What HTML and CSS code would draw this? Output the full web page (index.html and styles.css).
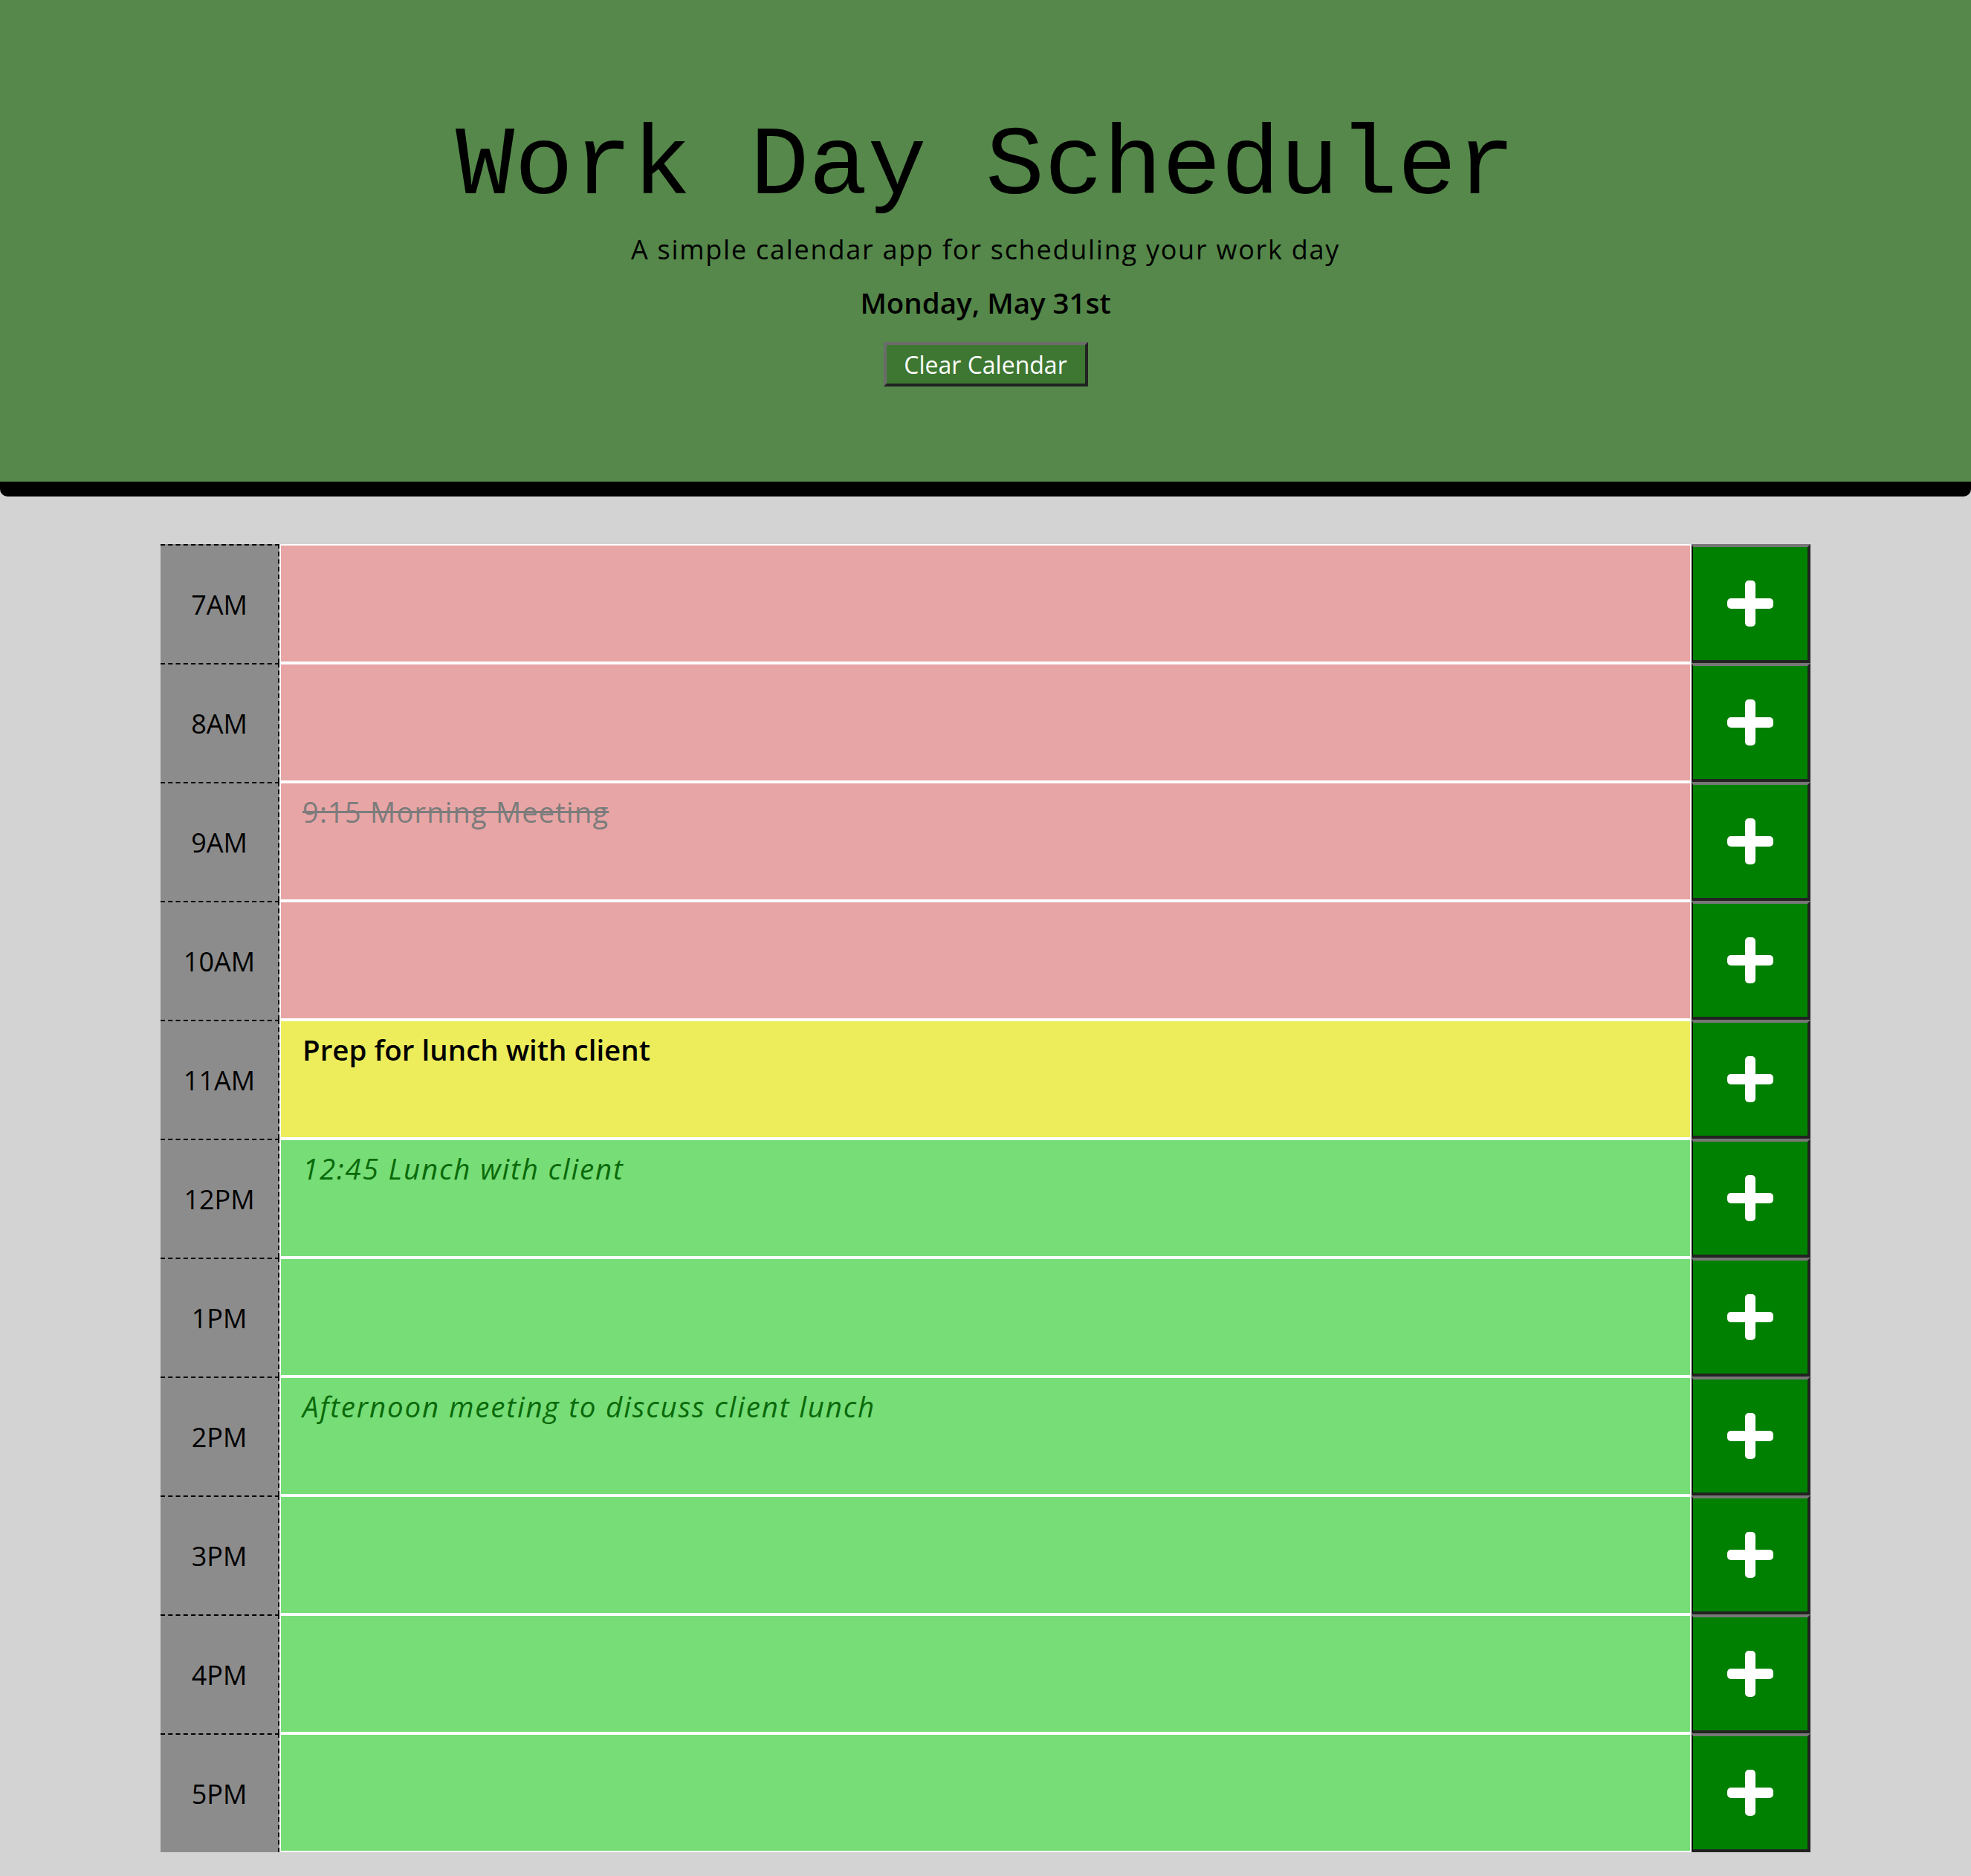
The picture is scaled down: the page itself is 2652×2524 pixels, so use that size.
FILE: index.html
```html
<!DOCTYPE html>
<html lang="en">
<head>
<meta charset="utf-8">
<title>Work Day Scheduler</title>
<link rel="stylesheet" href="styles.css">
</head>
<body>
<header class="jumbotron">
  <h1 class="title">Work Day Scheduler</h1>
  <p class="lead">A simple calendar app for scheduling your work day</p>
  <p class="current-day">Monday, May 31st</p>
  <button class="clear-btn" type="button">Clear Calendar</button>
</header>
<main class="container">
  <div class="row">
    <div class="hour">7AM</div>
    <textarea class="description past"></textarea>
    <button class="save-btn" type="button"><svg viewBox="0 0 62 62" width="62" height="62"><rect x="24" y="0" width="14" height="62" rx="5"/><rect x="0" y="24" width="62" height="14" rx="5"/></svg></button>
  </div>
  <div class="row">
    <div class="hour">8AM</div>
    <textarea class="description past"></textarea>
    <button class="save-btn" type="button"><svg viewBox="0 0 62 62" width="62" height="62"><rect x="24" y="0" width="14" height="62" rx="5"/><rect x="0" y="24" width="62" height="14" rx="5"/></svg></button>
  </div>
  <div class="row">
    <div class="hour">9AM</div>
    <textarea class="description past">9:15 Morning Meeting</textarea>
    <button class="save-btn" type="button"><svg viewBox="0 0 62 62" width="62" height="62"><rect x="24" y="0" width="14" height="62" rx="5"/><rect x="0" y="24" width="62" height="14" rx="5"/></svg></button>
  </div>
  <div class="row">
    <div class="hour">10AM</div>
    <textarea class="description past"></textarea>
    <button class="save-btn" type="button"><svg viewBox="0 0 62 62" width="62" height="62"><rect x="24" y="0" width="14" height="62" rx="5"/><rect x="0" y="24" width="62" height="14" rx="5"/></svg></button>
  </div>
  <div class="row">
    <div class="hour">11AM</div>
    <textarea class="description present">Prep for lunch with client</textarea>
    <button class="save-btn" type="button"><svg viewBox="0 0 62 62" width="62" height="62"><rect x="24" y="0" width="14" height="62" rx="5"/><rect x="0" y="24" width="62" height="14" rx="5"/></svg></button>
  </div>
  <div class="row">
    <div class="hour">12PM</div>
    <textarea class="description future">12:45 Lunch with client</textarea>
    <button class="save-btn" type="button"><svg viewBox="0 0 62 62" width="62" height="62"><rect x="24" y="0" width="14" height="62" rx="5"/><rect x="0" y="24" width="62" height="14" rx="5"/></svg></button>
  </div>
  <div class="row">
    <div class="hour">1PM</div>
    <textarea class="description future"></textarea>
    <button class="save-btn" type="button"><svg viewBox="0 0 62 62" width="62" height="62"><rect x="24" y="0" width="14" height="62" rx="5"/><rect x="0" y="24" width="62" height="14" rx="5"/></svg></button>
  </div>
  <div class="row">
    <div class="hour">2PM</div>
    <textarea class="description future">Afternoon meeting to discuss client lunch</textarea>
    <button class="save-btn" type="button"><svg viewBox="0 0 62 62" width="62" height="62"><rect x="24" y="0" width="14" height="62" rx="5"/><rect x="0" y="24" width="62" height="14" rx="5"/></svg></button>
  </div>
  <div class="row">
    <div class="hour">3PM</div>
    <textarea class="description future"></textarea>
    <button class="save-btn" type="button"><svg viewBox="0 0 62 62" width="62" height="62"><rect x="24" y="0" width="14" height="62" rx="5"/><rect x="0" y="24" width="62" height="14" rx="5"/></svg></button>
  </div>
  <div class="row">
    <div class="hour">4PM</div>
    <textarea class="description future"></textarea>
    <button class="save-btn" type="button"><svg viewBox="0 0 62 62" width="62" height="62"><rect x="24" y="0" width="14" height="62" rx="5"/><rect x="0" y="24" width="62" height="14" rx="5"/></svg></button>
  </div>
  <div class="row">
    <div class="hour">5PM</div>
    <textarea class="description future"></textarea>
    <button class="save-btn" type="button"><svg viewBox="0 0 62 62" width="62" height="62"><rect x="24" y="0" width="14" height="62" rx="5"/><rect x="0" y="24" width="62" height="14" rx="5"/></svg></button>
  </div>
</main>
</body>
</html>
```
FILE: styles.css
```css
html, body {
  margin: 0;
  padding: 0;
}

body {
  background: #d3d3d3;
  font-family: "Open Sans", "Noto Sans", sans-serif;
  color: #000;
  min-height: 2524px;
}

.jumbotron {
  background: #55884a;
  border-bottom: 20px solid #000;
  border-radius: 0 0 10px 10px;
  height: 648px;
  box-sizing: content-box;
  display: flex;
  flex-direction: column;
  align-items: center;
}

.title {
  font-family: "Liberation Mono", "DejaVu Sans Mono", monospace;
  font-weight: 400;
  font-size: 132px;
  line-height: 160px;
  margin: 145px 0 0;
}

.lead {
  font-size: 36px;
  font-weight: 400;
  letter-spacing: 1.75px;
  line-height: 48px;
  margin: 7px 0 0;
}

.current-day {
  font-size: 38.5px;
  font-weight: 600;
  line-height: 52px;
  margin: 21px 0 0;
}

.clear-btn {
  margin-top: 27px;
  width: 275px;
  height: 60px;
  background: #3d7732;
  color: #fff;
  font-family: "Open Sans", "Noto Sans", sans-serif;
  font-size: 32px;
  border-style: solid;
  border-width: 4px;
  border-color: #6b6b6b #222 #222 #6b6b6b;
  padding: 0;
}

.container {
  width: 2220px;
  margin: 64px auto 0;
  display: flex;
  flex-direction: column;
}

.row {
  display: grid;
  grid-template-columns: 160px 1fr 160px;
  height: 160px;
}

.hour {
  background: #8c8c8c;
  border-top: 2px dashed #000;
  border-right: 2px dashed #000;
  display: flex;
  align-items: center;
  justify-content: center;
  font-size: 36px;
}

.description {
  border: 2px solid #fff;
  margin: 0;
  resize: none;
  font-family: "Open Sans", "Noto Sans", sans-serif;
  font-size: 38px;
  padding: 12px 29px;
  outline: none;
  box-sizing: border-box;
  height: 160px;
}

.past {
  background: #e8a5a5;
  color: #7c7c7c;
  text-decoration: line-through;
  letter-spacing: 1.2px;
}

.present {
  background: #eded5c;
  color: #000;
  font-weight: 600;
  font-size: 38.5px;
}

.future {
  background: #77dd77;
  color: #0a6a0a;
  font-style: italic;
  font-size: 38.5px;
  letter-spacing: 1.85px;
  padding-top: 12px;
}

.save-btn {
  background: #008000;
  border-style: solid;
  border-width: 4px 4px 4px 2px;
  border-color: #777 #222 #222 #000;
  padding: 0;
  margin: 0;
  display: flex;
  align-items: center;
  justify-content: center;
}

.save-btn svg {
  fill: #fff;
  display: block;
}
```
